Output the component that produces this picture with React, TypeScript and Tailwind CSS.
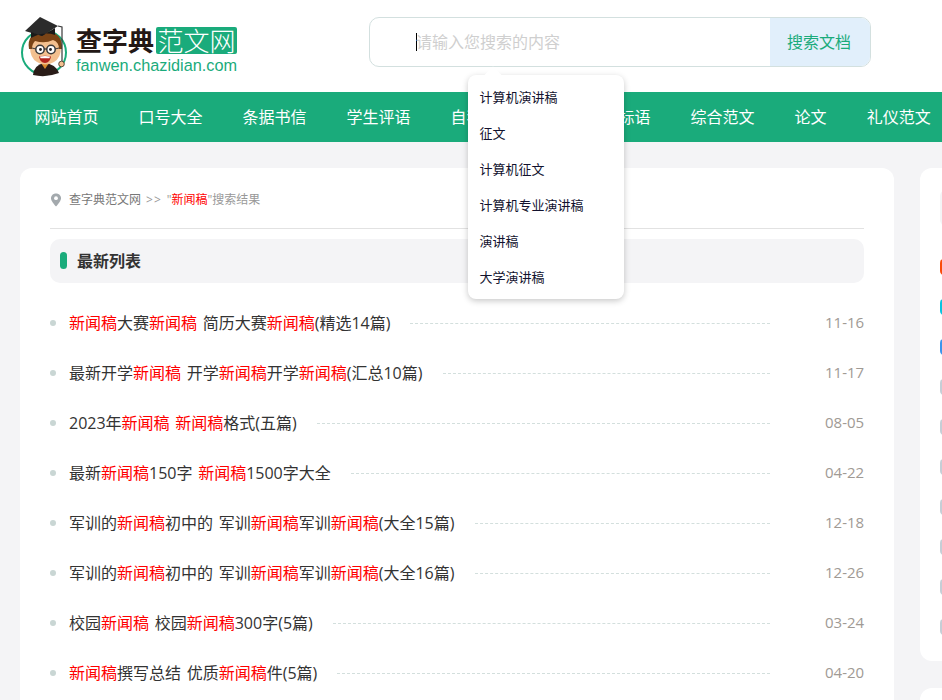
const NAV = ['网站首页', '口号大全', '条据书信', '学生评语', '自我鉴定', '宣传口号标语', '综合范文', '论文', '礼仪范文']

const SUGGESTIONS = ['计算机演讲稿', '征文', '计算机征文', '计算机专业演讲稿', '演讲稿', '大学演讲稿']

const RESULTS = [
  { title: '新闻稿大赛新闻稿 简历大赛新闻稿(精选14篇)', date: '11-16' },
  { title: '最新开学新闻稿 开学新闻稿开学新闻稿(汇总10篇)', date: '11-17' },
  { title: '2023年新闻稿 新闻稿格式(五篇)', date: '08-05' },
  { title: '最新新闻稿150字 新闻稿1500字大全', date: '04-22' },
  { title: '军训的新闻稿初中的 军训新闻稿军训新闻稿(大全15篇)', date: '12-18' },
  { title: '军训的新闻稿初中的 军训新闻稿军训新闻稿(大全16篇)', date: '12-26' },
  { title: '校园新闻稿 校园新闻稿300字(5篇)', date: '03-24' },
  { title: '新闻稿撰写总结 优质新闻稿件(5篇)', date: '04-20' },
]

const RANK_COLORS = ['bg-[#fa4b0a]', 'bg-[#08c4e0]', 'bg-[#3b95ec]', 'bg-[#c5ced6]', 'bg-[#c5ced6]', 'bg-[#c5ced6]', 'bg-[#c5ced6]', 'bg-[#c5ced6]', 'bg-[#c5ced6]', 'bg-[#c5ced6]']

function Highlighted({ text }: { text: string }) {
  const parts = text.split('新闻稿')
  return (
    <>
      {parts.map((p, i) => (
        <span key={i}>
          {i > 0 && <span className="text-[#ff0000]">新闻稿</span>}
          {p}
        </span>
      ))}
    </>
  )
}

function Mascot() {
  return (
    <svg width="50" height="62" viewBox="0 0 50 62" className="shrink-0">
      {/* ring */}
      <circle cx="24" cy="37.5" r="22" fill="none" stroke="#1aab7b" strokeWidth="2" />
      {/* gown */}
      <path d="M13 60 Q14 50 24 48 Q36 49 39 58 Q26 63 13 60Z" fill="#2a1c18" />
      <path d="M21 48 L25 54 L29 48Z" fill="#d98a2b" />
      {/* face */}
      <path d="M10 32 Q10 18 25 18 Q41 18 41 32 Q41 43 34 47 Q25 52 17 47 Q10 43 10 32Z" fill="#f3c08f" />
      {/* hair */}
      <path d="M9 34 Q6 18 25 16 Q43 17 42 34 L39 34 Q39 27 33 25 Q25 29 15 26 Q12 29 12 34Z" fill="#7a4416" />
      {/* glasses */}
      <circle cx="20" cy="34.5" r="4.2" fill="#fff" stroke="#3a3a3a" strokeWidth="1.5" />
      <circle cx="31" cy="34.5" r="4.2" fill="#fff" stroke="#3a3a3a" strokeWidth="1.5" />
      <path d="M24 34 H27" stroke="#3a3a3a" strokeWidth="1.3" />
      <path d="M12 33 L16 34 M35 34 L39 33" stroke="#3a3a3a" strokeWidth="1" />
      <circle cx="20.5" cy="34.5" r="1.4" fill="#222" />
      <circle cx="30.5" cy="34.5" r="1.4" fill="#222" />
      {/* mouth */}
      <path d="M19 41.5 Q25 40 31 41.5 Q30 48 25 48 Q20 48 19 41.5Z" fill="#b3241c" />
      <path d="M20 41.5 Q25 40.5 30 41.5 L29.5 43.2 H20.5Z" fill="#fff" />
      {/* cap */}
      <path d="M5 16 L20 2 L38 11 L22 21 Z" fill="#2b2b2b" />
      <path d="M11 17 L11 23 Q24 16 35 20 L35 13 L22 21Z" fill="#1a1a1a" />
      {/* tassel */}
      <path d="M38 11 L42 12 L42 46" fill="none" stroke="#3a3a3a" strokeWidth="1.2" />
      <circle cx="41.5" cy="49" r="2.8" fill="#f3c08f" stroke="#3a2a20" strokeWidth="0.8" />
    </svg>
  )
}

export default function App() {
  return (
    <div className="relative h-screen w-full overflow-hidden bg-[#f4f4f6] font-['Open_Sans','Noto_Sans_CJK_SC',sans-serif] text-[#333]">
      {/* Header */}
      <header className="flex h-[92px] items-start bg-white pl-[20px]">
        <div className="mt-[15px] flex w-[349px]">
          <Mascot />
          <div className="ml-[6px] mt-[12px] w-[162px]">
            <div className="flex h-[27px] items-center">
              <span className="w-[80px] text-[26px] font-bold leading-none text-[#231815]">查字典</span>
              <span className="flex h-[27px] w-[81px] items-center justify-center rounded-[2px] bg-[#1aab7b] text-[26px] font-light leading-none text-white">范文网</span>
            </div>
            <div className="mt-[2px] font-['Liberation_Sans',sans-serif] text-[16.3px] leading-[19px] text-[#1aab7b]">fanwen.chazidian.com</div>
          </div>
        </div>
        <div className="mt-[17px] flex h-[50px] w-[502px] overflow-hidden rounded-[10px] border border-[#d3e0df]">
          <div className="flex flex-1 items-center pl-[46px] text-[16px] text-[#cfcfcf]">
            <span className="-mr-px border-l border-black leading-[18px]"><span className="-ml-px">请输入您搜索的内容</span></span>
          </div>
          <div className="flex w-[100px] items-center justify-center bg-[#e1effb] pr-[2px] text-[16px] text-[#1aab7b]">搜索文档</div>
        </div>
      </header>

      {/* Nav */}
      <nav className="flex h-[50px] items-center gap-[40px] bg-[#1aab7b] pl-[34.5px] text-[16px] whitespace-nowrap text-white">
        {NAV.map((n) => (
          <span key={n}>{n}</span>
        ))}
      </nav>

      {/* Suggestions dropdown */}
      <div className="absolute left-[468px] top-[75px] z-10 w-[156px] rounded-[8px] bg-white pb-[3px] pt-[5px] shadow-[0_2px_6px_rgba(0,0,0,0.22)]">
        <div className="absolute -top-[6px] left-[19px] h-[12px] w-[12px] rotate-45 bg-white" />
        {SUGGESTIONS.map((s) => (
          <div key={s} className="relative flex h-[36px] items-center pl-[11.5px] text-[13px] text-[#12122e]">{s}</div>
        ))}
      </div>

      {/* Body */}
      <div className="mt-[26px] flex gap-[26px] pl-[20px]">
        <main className="w-[874px] shrink-0 rounded-[12px] bg-white px-[30px] pb-[20px]">
          <div className="flex h-[61px] items-center border-b border-[#e2e2e2] pt-[3px] text-[12px] text-[#999]">
            <svg width="12" height="14" viewBox="0 0 12 14" className="mr-[7px] shrink-0">
              <path d="M6 0.5 C2.8 0.5 1 2.8 1 5.2 C1 8.4 6 13.5 6 13.5 C6 13.5 11 8.4 11 5.2 C11 2.8 9.2 0.5 6 0.5Z" fill="#a3a9ad" />
              <circle cx="6" cy="5.2" r="1.9" fill="#fff" />
            </svg>
            <span className="text-[#777]">查字典范文网</span>
            <span className="mx-[5px] tracking-[1px]">&gt;&gt;</span>
            <span>"<span className="text-[#ff0000]">新闻稿</span>"搜索结果</span>
          </div>
          <div className="mt-[10px] flex h-[44px] items-center rounded-[10px] bg-[#f4f4f6] pb-[1px] pl-[10px]">
            <span className="h-[17px] w-[7px] rounded-full bg-[#1aab7b]" />
            <h2 className="ml-[10px] text-[16px] font-bold text-[#333]">最新列表</h2>
          </div>
          <ul className="mt-[15px]">
            {RESULTS.map((r, i) => (
              <li key={i} className="flex h-[50px] items-center">
                <span className="h-[6px] w-[6px] shrink-0 rounded-full bg-[#c9d6d4]" />
                <span className="ml-[13px] text-[16px] whitespace-nowrap text-[#333] [word-spacing:1.5px]">
                  <Highlighted text={r.title} />
                </span>
                <span className="mx-[20px] flex-1 border-t border-dashed border-[#d3dfdd]" />
                <span className="ml-[35px] w-[39px] pb-[2px] text-right text-[15px] whitespace-nowrap text-[#a09a94]">{r.date}</span>
              </li>
            ))}
          </ul>
        </main>

        <aside className="w-[300px] shrink-0">
          <div className="h-[493px] rounded-[12px] bg-white pl-[20px] pt-[22px]">
            <div className="h-[36px] rounded-[6px] bg-[#f4f4f6]" />
            <div className="mt-[33px] flex flex-col gap-[24px]">
              {RANK_COLORS.map((c, i) => (
                <span key={i} className={`h-[16px] w-[16px] rounded-[4px] ${c}`} />
              ))}
            </div>
          </div>
          <div className="mt-[27px] h-[300px] rounded-[12px] bg-white" />
        </aside>
      </div>
    </div>
  )
}
